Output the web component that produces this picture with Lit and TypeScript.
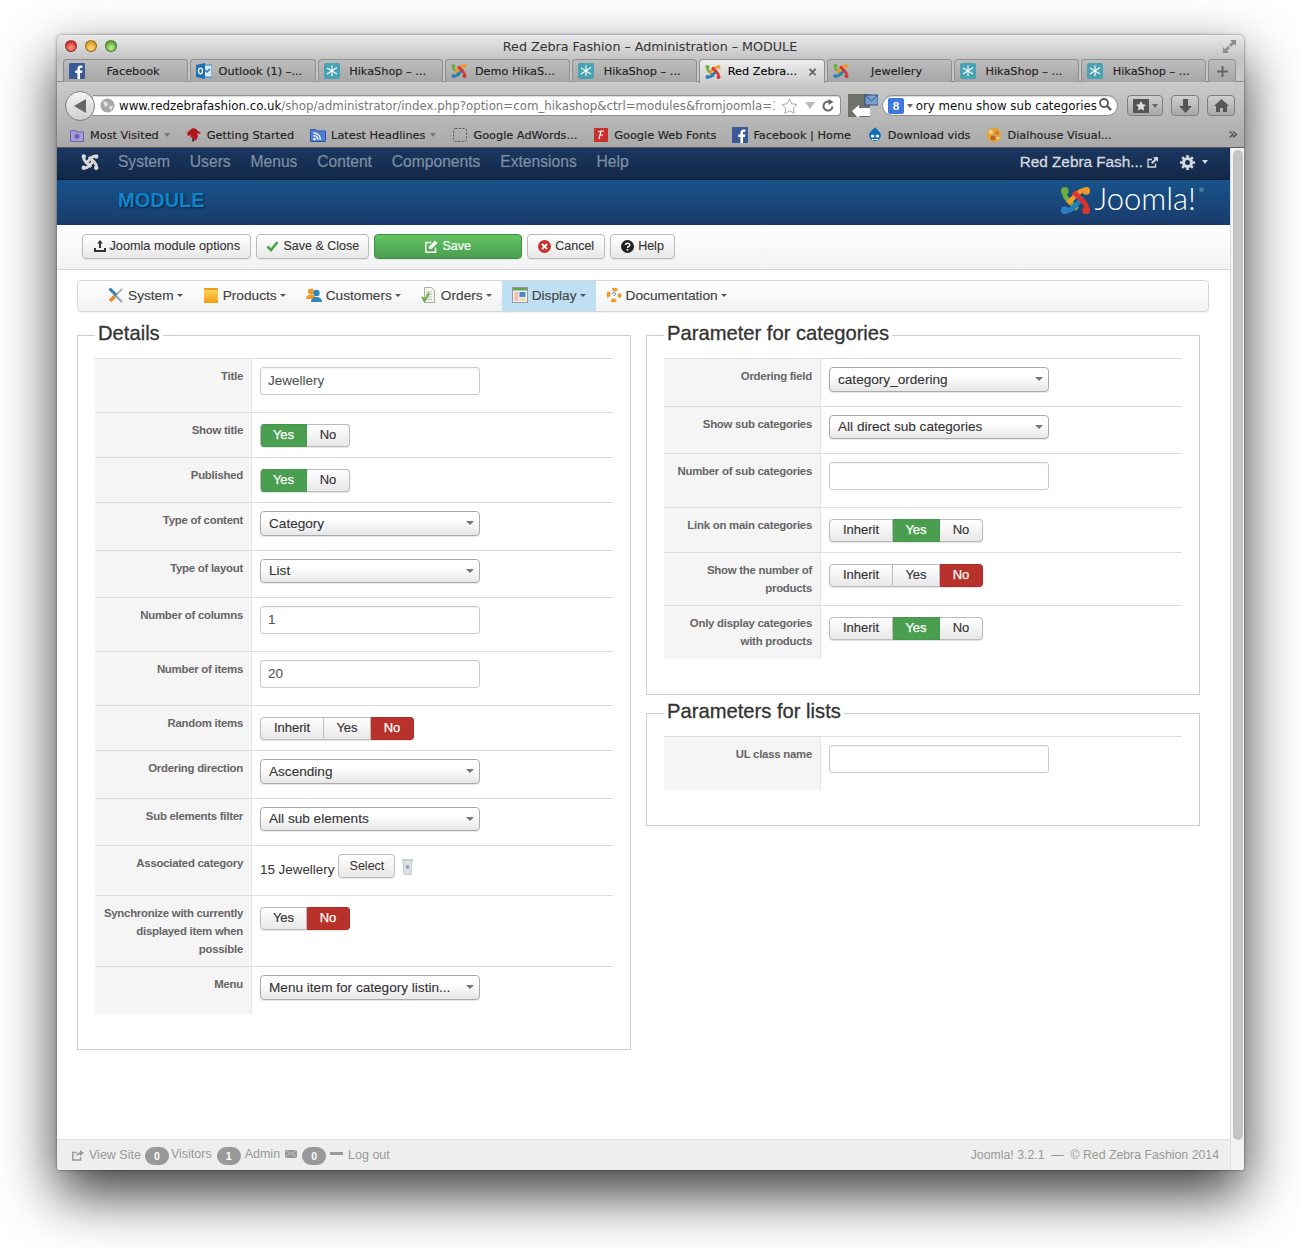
import { LitElement, html, css, svg } from "lit";
import { customElement } from "lit/decorators.js";

const joomlaPaths = (g: string, o: string, r: string, b: string) => svg`
  <g fill="none" stroke-width="5" stroke-linecap="butt">
    <path stroke="${g}" d="M5 7C4 10 6 12 8 14L18 24"/>
    <path stroke="${o}" d="M25 5C22 4 20 6 18 8L8 18"/>
    <path stroke="${b}" d="M7 25C10 26 12 24 14 22L24 12"/>
    <path stroke="${r}" d="M27 23C28 20 26 18 24 16L14 6"/>
  </g>
  <circle cx="5" cy="5" r="4" fill="${g}"/><circle cx="27" cy="5" r="4" fill="${o}"/>
  <circle cx="5" cy="25" r="4" fill="${b}"/><circle cx="27" cy="25" r="4" fill="${r}"/>`;

const joomla = (size: number, mono?: string) => html`<svg class="ic" width="${size}" height="${size}" viewBox="0 0 32 30">
  ${mono ? joomlaPaths(mono, mono, mono, mono) : joomlaPaths("#6cae3e", "#f09a2c", "#d9352f", "#2c7cc0")}</svg>`;

const fb = html`<svg class="ic" width="16" height="16" viewBox="0 0 16 16"><rect width="16" height="16" rx="1" fill="#3b5998"/><path fill="#fff" d="M11 16V10h2l.4-2.500H11V6c0-.8.3-1.200 1.200-1.200h1.300V2.500c-.4 0-1.100-.1-1.900-.1-2 0-3.200 1.200-3.200 3.300v1.800H6.200V10h2.200v6z"/></svg>`;
const outlook = html`<svg class="ic" width="16" height="16" viewBox="0 0 16 16"><rect x="6" y="2" width="10" height="12" fill="#d8e8f6" stroke="#3b88c8"/><path d="M9 7l2 2 3-3" stroke="#1f6fb5" stroke-width="1.400" fill="none"/><path fill="#1f6fb5" d="M0 2l9-2v16l-9-2z"/><ellipse cx="4.500" cy="8" rx="2" ry="2.800" fill="none" stroke="#fff" stroke-width="1.300"/></svg>`;
const hika = html`<svg class="ic" width="16" height="16" viewBox="0 0 16 16"><rect width="16" height="16" rx="2" fill="#4aa3b5"/><path stroke="#fff" stroke-width="1.100" fill="none" d="M8 2.500V13M3 5l10 6M13 4.500L3 11"/></svg>`;
const purpleFolder = html`<svg class="ic" width="16" height="16" viewBox="0 0 16 16"><path fill="#a79bd8" stroke="#6f62a8" d="M1.500 3.500h5l1 1.500h7v9.500h-13z"/><circle cx="8" cy="9.500" r="2.500" fill="#6f5cc0"/></svg>`;
const fireDragon = html`<svg class="ic" width="16" height="16" viewBox="0 0 16 16"><path fill="#b3171d" d="M1 6l3-3 3-2 3 1 2 2 3 2-2 1-2-1 1 3-1 3-2 2-1-2-1 1-1-3-2 1 1-3-3 1z"/><path fill="#1a1a1a" d="M6 14l1-4 1 5zM9 3l1 1-1 0z"/></svg>`;
const rss = html`<svg class="ic" width="16" height="16" viewBox="0 0 16 16"><path fill="#4f7fd8" stroke="#2b55a8" d="M.5 2.500h5l1 1.500h9v10.500H.5z"/><circle cx="4.500" cy="12" r="1.300" fill="#fff"/><path d="M3.500 8.500a4.500 4.500 0 0 1 4.500 4.500M3.500 5.800a7 7 0 0 1 7 7" stroke="#fff" stroke-width="1.300" fill="none"/></svg>`;
const dashed = html`<svg class="ic" width="16" height="16" viewBox="0 0 16 16"><rect x="1.500" y="1.500" width="13" height="13" rx="2" fill="none" stroke="#555" stroke-dasharray="2 1.500"/></svg>`;
const fontsIc = html`<svg class="ic" width="16" height="16" viewBox="0 0 16 16"><rect x="1" y="1" width="14" height="14" fill="#c9302c"/><path d="M6 12l2-8h3M6.500 8h3.500M5 4.500h3" stroke="#fff" stroke-width="1.200" fill="none"/></svg>`;
const drupal = html`<svg class="ic" width="16" height="16" viewBox="0 0 16 16"><path fill="#0b6fb5" d="M8 0c1 2 5 4 6 8a6 6 0 0 1-12 0c1-4 5-6 6-8z"/><ellipse cx="5.500" cy="9" rx="1.800" ry="1.600" fill="#fff"/><ellipse cx="10.500" cy="9" rx="1.800" ry="1.600" fill="#fff"/><path d="M5 12.500h6" stroke="#fff" stroke-width="1.200"/></svg>`;
const dial = html`<svg class="ic" width="16" height="16" viewBox="0 0 16 16"><circle cx="8" cy="8" r="7.500" fill="#e0a53c"/><circle cx="5" cy="5" r="2" fill="#f4d878"/><circle cx="11" cy="6" r="2" fill="#d9782f"/><circle cx="7" cy="11" r="2.500" fill="#b85f30"/><circle cx="12" cy="11" r="1.500" fill="#f0d080"/></svg>`;

const upload = html`<svg class="ic" width="12" height="12" viewBox="0 0 12 12"><path fill="#333" d="M6 0l3 3.500H7V8H5V3.500H3zM0 8h2v2h8V8h2v4H0z"/></svg>`;
const check = html`<svg class="ic" width="13" height="12" viewBox="0 0 13 12"><path d="M1.500 6.500l3.500 3.500L11.500 2" fill="none" stroke="#46a546" stroke-width="2.600"/></svg>`;
const edit = html`<svg class="ic" width="13" height="13" viewBox="0 0 13 13"><path fill="none" stroke="#fff" stroke-width="1.500" d="M10.500 7.500v4.700H.8V2.500h5.500"/><path fill="#fff" d="M4 6.500L10 .5l2.500 2.500-6 6H4z"/></svg>`;
const cancel = html`<svg class="ic" width="13" height="13" viewBox="0 0 13 13"><circle cx="6.500" cy="6.500" r="6.500" fill="#c9302c"/><path d="M4 4l5 5M9 4l-5 5" stroke="#fff" stroke-width="1.800"/></svg>`;
const help = html`<svg class="ic" width="13" height="13" viewBox="0 0 13 13"><circle cx="6.500" cy="6.500" r="6.500" fill="#222"/><path d="M4.500 5c0-2.500 4.200-2.500 4.200 0 0 1.600-2.200 1.400-2.200 3" fill="none" stroke="#fff" stroke-width="1.500"/><rect x="5.700" y="9" width="1.600" height="1.600" fill="#fff"/></svg>`;

const tools = html`<svg class="ic" width="16" height="16" viewBox="0 0 16 16"><path d="M8 8L14 2" stroke="#a8b0b8" stroke-width="2"/><path d="M2 14L8 8" stroke="#e88a25" stroke-width="3.400"/><path d="M7 8l7 7" stroke="#8fa0ae" stroke-width="2"/><path d="M1.500 1.500L8 8" stroke="#2f7fb8" stroke-width="3"/></svg>`;
const folder = html`<svg class="ic" width="16" height="16" viewBox="0 0 16 16" ><defs><linearGradient id="fo" x1="0" y1="0" x2="0" y2="1"><stop offset="0" stop-color="#ffd25a"/><stop offset="1" stop-color="#f59d12"/></linearGradient></defs><path fill="#e8a020" d="M1 1h14v3H1z"/><rect x="1" y="3" width="14" height="13" fill="url(#fo)"/></svg>`;
const users = html`<svg class="ic" width="16" height="16" viewBox="0 0 16 16"><circle cx="5" cy="4.500" r="3" fill="#f09a2c"/><path fill="#f09a2c" d="M0 12c0-3 2-4.500 5-4.500s5 1.500 5 4.500z"/><circle cx="10.500" cy="6" r="3.200" fill="#2f86b8"/><path fill="#2f86b8" d="M5 15c0-3.500 2.500-5 5.500-5s5.500 1.500 5.500 5z"/></svg>`;
const orders = html`<svg class="ic" width="16" height="16" viewBox="0 0 16 16"><path fill="#f5f5f0" stroke="#aaa" d="M3.500.5h7l3 3v12h-10z"/><path stroke="#bbb" d="M5 5h6M5 7.500h6M5 10h6M5 12.500h6"/><path d="M1 10l2.500 4L8 6" fill="none" stroke="#6cae3e" stroke-width="2"/></svg>`;
const display = html`<svg class="ic" width="16" height="16" viewBox="0 0 16 16"><rect x=".5" y=".5" width="15" height="15" fill="#eef" stroke="#999"/><rect x="1" y="1" width="14" height="2.500" fill="#5aa84a"/><rect x="2.500" y="5" width="4" height="9" fill="#f4b8a8"/><rect x="7.500" y="5" width="6" height="5" fill="#4a8ac8"/><rect x="7.500" y="11" width="6" height="3" fill="#e8e090"/></svg>`;
const buoy = html`<svg class="ic" width="16" height="16" viewBox="0 0 16 16"><circle cx="8" cy="8" r="5.500" fill="none" stroke="#f09a2c" stroke-width="3.600" stroke-dasharray="5 3.640" stroke-dashoffset="2.500"/><circle cx="8" cy="8" r="5.500" fill="none" stroke="#e8e8e8" stroke-width="1"  stroke-dasharray="3 5.640" stroke-dashoffset="-3.200"/><path d="M6.500 7c0-2 3-2 3 0 0 1-1.500 1-1.500 2" fill="none" stroke="#3d7fb5"/></svg>`;

const tabs: [any, string, boolean?][] = [
  [fb, "Facebook"], [outlook, "Outlook (1) –..."], [hika, "HikaShop – ..."], [joomla(16), "Demo HikaS..."],
  [hika, "HikaShop – ..."], [joomla(16), "Red Zebra...", true], [joomla(16), "Jewellery"], [hika, "HikaShop – ..."], [hika, "HikaShop – ..."],
];
const marks: [any, string, boolean?][] = [
  [purpleFolder, "Most Visited", true], [fireDragon, "Getting Started"], [rss, "Latest Headlines", true], [dashed, "Google AdWords..."],
  [fontsIc, "Google Web Fonts"], [fb, "Facebook | Home"], [drupal, "Download vids"], [dial, "Dialhouse Visual..."],
];

type Row = { label: string[]; kind: "input" | "sel" | "tg" | "assoc"; value?: string; opts?: string[]; on?: string };
const yn = ["Yes", "No"], iyn = ["Inherit", "Yes", "No"];
const left: Row[] = [
  { label: ["Title"], kind: "input", value: "Jewellery" },
  { label: ["Show title"], kind: "tg", opts: yn, on: "Yes" },
  { label: ["Published"], kind: "tg", opts: yn, on: "Yes" },
  { label: ["Type of content"], kind: "sel", value: "Category" },
  { label: ["Type of layout"], kind: "sel", value: "List" },
  { label: ["Number of columns"], kind: "input", value: "1" },
  { label: ["Number of items"], kind: "input", value: "20" },
  { label: ["Random items"], kind: "tg", opts: iyn, on: "No" },
  { label: ["Ordering direction"], kind: "sel", value: "Ascending" },
  { label: ["Sub elements filter"], kind: "sel", value: "All sub elements" },
  { label: ["Associated category"], kind: "assoc" },
  { label: ["Synchronize with currently", "displayed item when", "possible"], kind: "tg", opts: yn, on: "No" },
  { label: ["Menu"], kind: "sel", value: "Menu item for category listin..." },
];
const right: Row[] = [
  { label: ["Ordering field"], kind: "sel", value: "category_ordering" },
  { label: ["Show sub categories"], kind: "sel", value: "All direct sub categories" },
  { label: ["Number of sub categories"], kind: "input", value: "" },
  { label: ["Link on main categories"], kind: "tg", opts: iyn, on: "Yes" },
  { label: ["Show the number of", "products"], kind: "tg", opts: iyn, on: "No" },
  { label: ["Only display categories", "with products"], kind: "tg", opts: iyn, on: "Yes" },
];
const lists: Row[] = [{ label: ["UL class name"], kind: "input", value: "" }];

@customElement("app-root")
export class AppRoot extends LitElement {
  static styles = css`
    :host { display: block; width: 1301px; height: 1249px; padding: 35px 57px 0; box-sizing: border-box; background: #fff; font-family: "Liberation Sans", Arial, sans-serif; overflow: hidden; }
    * { box-sizing: border-box; }
    .ic { display: block; flex: none; }
    .win { width: 1187px; height: 1135px; display: flex; flex-direction: column; border-radius: 5px 5px 3px 3px; box-shadow: 0 24px 56px rgba(0,0,0,.78), 0 0 3px rgba(0,0,0,.5); background: #fff; overflow: hidden; }
    .chrome { height: 113px; flex: none; display: flex; flex-direction: column; background: linear-gradient(#e9e9e9, #c4c4c4 24px, #c9c9c9 48px, #a9a9a9 113px); font-family: "DejaVu Sans", sans-serif; color: #222; border-bottom: 1px solid #5a5a5a; }
    .title { height: 24px; flex: none; display: flex; align-items: center; padding: 0 8px 2px; gap: 8px; }
    .dot { width: 12px; height: 12px; border-radius: 50%; border: 1px solid rgba(0,0,0,.35); }
    .dot.r { background: radial-gradient(circle at 50% 70%, #ff9a8f, #d7342b 70%); }
    .dot.y { background: radial-gradient(circle at 50% 70%, #ffe08a, #d99a1d 70%); }
    .dot.g { background: radial-gradient(circle at 50% 70%, #bdf29a, #5da832 70%); }
    .ttext { flex: 1; text-align: center; font-size: 12.7px; color: #333; padding-right: 40px; }
    .tabs { height: 23px; flex: none; display: flex; gap: 2px; padding-left: 6px; border-bottom: 1px solid #8a8a8a; }
    .tab { width: 125.25px; height: 23px; flex: none; display: flex; align-items: center; padding: 0 6px 0 5px; border: 1px solid #8f8f8f; border-bottom: none; border-radius: 4px 4px 0 0; background: linear-gradient(#bdbdbd, #a6a6a6); font-size: 11.3px; color: #222; -webkit-text-stroke: .15px #222; }
    .tab.on { background: linear-gradient(#eee, #cdcdcd); color: #000; height: 24px; z-index: 1; }
    .tab span { flex: 1; text-align: center; white-space: nowrap; overflow: hidden; }
    .tab .x { flex: none; width: 14px; color: #666; font-size: 12px; text-align: right; font-weight: 700; }
    .plus { width: 28px; height: 23px; border: 1px solid #8f8f8f; border-bottom: none; border-radius: 4px 4px 0 0; background: linear-gradient(#bdbdbd, #a6a6a6); display: flex; align-items: center; justify-content: center; color: #555; }
    .nav { height: 42px; flex: none; display: flex; align-items: center; padding-left: 8px; padding-top: 5px; }
    .back { width: 30px; height: 30px; border-radius: 50%; background: linear-gradient(#f4f4f4, #cfcfcf); border: 1px solid #7d7d7d; display: flex; align-items: center; justify-content: center; flex: none; position: relative; z-index: 1; }
    .url { width: 748px; margin-left: -2px; height: 21px; background: #fff; border: 1px solid #8d8d8d; border-left: none; border-radius: 0 4px 4px 0; display: flex; align-items: center; padding-left: 5px; flex: none; font-size: 11.8px; color: #777; box-shadow: inset 0 1px 1px rgba(0,0,0,.15); }
    .url .u { width: 656px; overflow: hidden; white-space: nowrap; margin-left: 4px; flex: none; }
    .url b { font-weight: 400; color: #111; }
    .url .end { display: flex; gap: 7px; align-items: center; margin-left: 6px; }
    .feed { width: 30px; height: 23px; margin-left: 7px; flex: none; }
    .search { width: 236px; height: 21px; margin-left: 4px; flex: none; background: #fff; border: 1px solid #8d8d8d; border-radius: 11px; display: flex; align-items: center; padding: 0 5px; font-size: 11.8px; color: #111; box-shadow: inset 0 1px 1px rgba(0,0,0,.15); }
    .gbox { width: 16px; height: 16px; background: #3c78e0; border-radius: 2px; color: #fff; font: 700 13px/16px "Liberation Serif", serif; text-align: center; flex: none; }
    .tri { width: 0; height: 0; border-left: 3.500px solid transparent; border-right: 3.500px solid transparent; border-top: 4px solid #666; flex: none; }
    .q { width: 182px; margin: 0 2px 0 2px; display: flex; justify-content: flex-end; overflow: hidden; white-space: nowrap; flex: none; }
    .nb { height: 21px; border: 1px solid #7d7d7d; border-radius: 4px; background: linear-gradient(#cfcfcf, #a8a8a8); display: flex; align-items: center; justify-content: center; gap: 3px; flex: none; margin-left: 8px; }
    .marks { height: 24px; flex: none; display: flex; align-items: center; padding: 0 0 2px 12px; font-size: 11.3px; color: #222; -webkit-text-stroke: .15px #222; white-space: nowrap; position: relative; }
    .mk { display: flex; align-items: center; gap: 5px; margin-right: 16px; }
    .more { position: absolute; right: 6px; top: 0; font-size: 16px; color: #555; }

    .page { flex: 1; display: flex; min-height: 0; }
    .main { flex: 1; display: flex; flex-direction: column; min-width: 0; }
    .sb { width: 14px; flex: none; background: #f3f3f3; border-left: 1px solid #ddd; padding: 2px 1px 30px 2px; }
    .sb div { height: 100%; border-radius: 6px; background: #c4c4c4; }
    .topnav { height: 32px; flex: none; display: flex; align-items: center; background: linear-gradient(#1b3760, #122747); border-bottom: 1px solid #0d1c33; padding: 0 0 3px 24px; color: #7e8ea5; font-size: 15.65px; -webkit-text-stroke: .2px #7e8ea5; }
    .tn { padding: 0 9.900px; }
    .topnav .lg { margin-right: 9px; }
    .topnav .rt { margin-left: auto; display: flex; align-items: center; color: #d5d9de; -webkit-text-stroke: .3px #d5d9de; font-size: 15.3px; padding-right: 22px; gap: 4px; }
    .hdr { height: 45px; flex: none; display: flex; align-items: center; justify-content: space-between; background: linear-gradient(#175389, #1a3b6c); padding: 0 26px 4px 61px; }
    .hdr h1 { margin: 0; font-size: 20px; font-weight: 700; color: #0b86cd; text-shadow: 1px 1px 2px rgba(0,0,0,.6); }
    .brand { display: flex; align-items: center; gap: 3px; color: #fff; font: 300 31px/30px Lato, "Open Sans", sans-serif; }
    .brand span { margin-top: -5px; }
    .brand sup { font-size: 6px; line-height: 6px; align-self: flex-start; margin: 2px 0 0 0; }
    .bar { height: 45px; flex: none; display: flex; align-items: center; gap: 5px; padding: 0 0 2px 25px; background: linear-gradient(#fff, #f2f2f2); border-bottom: 1px solid #d5d5d5; }
    .btn { height: 25px; display: flex; align-items: center; justify-content: center; gap: 4px; padding: 0 10px; background: linear-gradient(#fff, #e8e8e8); border: 1px solid #bbb; border-radius: 4px; font-size: 12.5px; color: #333; -webkit-text-stroke: .1px #333; white-space: nowrap; box-shadow: 0 1px 1px rgba(0,0,0,.08); }
    .btn.first { font-size: 12.7px; padding: 0 10.500px; }
    .btn.second { padding: 0 9px; }
    .btn.save { width: 148px; background: linear-gradient(#62c462, #4a9e4f); border-color: #3f8f44; color: #fff; -webkit-text-stroke: .2px #fff; }
    .body { flex: 1; min-height: 0; padding: 10px 0 0 20px; }
    .menu { width: 1132px; height: 32px; display: flex; align-items: stretch; padding-left: 20px; background: linear-gradient(#fff, #f2f2f2); border: 1px solid #d5d5d5; border-radius: 4px; font-size: 13.7px; color: #444; box-shadow: 0 1px 1px rgba(0,0,0,.06); }
    .mi { display: flex; align-items: center; gap: 4px; padding: 0 10px 2px; -webkit-text-stroke: .15px #444; }
    .mi.on { background: #bfe0f3; }
    .caret { width: 0; height: 0; border-left: 3px solid transparent; border-right: 3px solid transparent; border-top: 3px solid #555; margin-left: -1px; flex: none; }
    .cols { display: flex; gap: 15px; margin-top: 11px; align-items: flex-start; }
    .col { width: 554px; flex: none; display: flex; flex-direction: column; gap: 6px; }
    fieldset { margin: 0; padding: 11px 17px 35px; border: 1px solid #ccc; min-width: 0; width: 554px; }
    legend { padding: 0 3px 4px; font-size: 20.2px; line-height: 20px; color: #333; -webkit-text-stroke: .3px #333; }
    .row { display: flex; border-top: 1px solid #ddd; }
    .lab { width: 157px; flex: none; background: #f5f5f5; border-right: 1px solid #e5e5e5; padding: 8px 8px 8px 0; text-align: right; font-size: 11.4px; letter-spacing: -.25px; line-height: 18px; font-weight: 700; color: #666; }
    .row:last-child .lab { padding-bottom: 9px; }
    .val { flex: 1; padding-left: 8px; }
    .inp { width: 220px; height: 28px; margin: 8px 0 17px; border: 1px solid #ccc; border-radius: 3px; background: #fff; padding: 0 7px; font-size: 13.5px; line-height: 26px; color: #555; -webkit-text-stroke: .1px #555; box-shadow: inset 0 1px 1px rgba(0,0,0,.05); }
    .sel { width: 220px; height: 24.500px; margin: 8px 0 14px; border: 1px solid #aaa; border-radius: 4px; background: linear-gradient(#fff 35%, #e6e6e6); padding: 0 5px 0 8px; font-size: 13.6px; color: #333; -webkit-text-stroke: .1px #333; display: flex; align-items: center; justify-content: space-between; box-shadow: 0 1px 1px rgba(0,0,0,.1); }
    .sel .tri { border-top-color: #777; border-left-width: 4px; border-right-width: 4px; }
    .tg { display: flex; margin: 11px 0 10px; height: 23px; width: fit-content; border-radius: 4px; box-shadow: 0 1px 1px rgba(0,0,0,.12); font-size: 13px; }
    .tg div { display: flex; align-items: center; justify-content: center; padding-bottom: 2px; background: linear-gradient(#fff, #e8e8e8); border: 1px solid #bbb; border-left: none; color: #333; -webkit-text-stroke: .15px #333; }
    .tg div:first-child { border-left: 1px solid #bbb; border-radius: 4px 0 0 4px; }
    .tg div:last-child { border-radius: 0 4px 4px 0; }
    .tg .Inherit { width: 64px; }
    .tg .Yes { width: 47px; }
    .tg .No { width: 43px; }
    .tg .g { background: #4a9e4f; border-color: #46964b; color: #fff; -webkit-text-stroke: .25px #fff; }
    .tg .d { background: #b8312b; border-color: #b02d27; color: #fff; -webkit-text-stroke: .25px #fff; }
    .assoc { display: flex; align-items: flex-start; height: 49px; font-size: 13.4px; color: #333; }
    .assoc .t { margin: 16px 4px 0 0; }
    .assoc .b { margin-top: 8px; height: 24px; width: 57px; padding-bottom: 1px; display: flex; align-items: center; justify-content: center; background: linear-gradient(#fff, #e8e8e8); border: 1px solid #bbb; border-radius: 4px; font-size: 12.500px; box-shadow: 0 1px 1px rgba(0,0,0,.1); }
    .assoc svg { margin: 12px 0 0 7px; }
    .foot { height: 31px; flex: none; display: flex; align-items: center; background: #eee; border-top: 1px solid #ddd; padding: 0 11px 0 15px; font-size: 12.500px; color: #999; }
    .foot .tx { margin-left: 5px; }
    .badge { width: 24px; height: 18px; border-radius: 9px; background: #999; color: #fff; font-size: 10.500px; font-weight: 700; display: flex; align-items: center; justify-content: center; margin: 2px 2px 0 4px; flex: none; }
    .badge.wide { margin-left: 5px; }
    .foot .up { margin-top: -2px; }
    .foot .adm { margin-left: 2px; }
    .foot .rt { margin-left: auto; font-size: 12.3px; }
  `;

  private control(r: Row) {
    if (r.kind === "input") return html`<div class="inp">${r.value}</div>`;
    if (r.kind === "sel") return html`<div class="sel"><span>${r.value}</span><i class="tri"></i></div>`;
    if (r.kind === "tg") {
      return html`<div class="tg">${r.opts!.map((o) => {
        const cls = o === r.on ? (o === "No" ? "d" : "g") : "";
        return html`<div class="${o} ${cls}">${o}</div>`;
      })}</div>`;
    }
    return html`<div class="assoc"><span class="t">15 Jewellery</span><span class="b">Select</span>
      <svg width="11" height="17" viewBox="0 0 11 17"><path fill="#dfe2e5" stroke="#c2c6cb" d="M1 2.500h9l-1 14H2z"/><rect x="0" y="1" width="11" height="2" fill="#c8cbcf"/><circle cx="5.500" cy="9" r="2" fill="#8ea6bd"/></svg></div>`;
  }

  private rows(list: Row[]) {
    return list.map((r) => html`<div class="row"><div class="lab">${r.label.map((l) => html`${l}<br />`)}</div><div class="val">${this.control(r)}</div></div>`);
  }

  render() {
    return html`<div class="win">
      <div class="chrome">
        <div class="title">
          <i class="dot r"></i><i class="dot y"></i><i class="dot g"></i>
          <div class="ttext">Red Zebra Fashion – Administration – MODULE</div>
          <svg class="ic" width="13" height="13" viewBox="0 0 13 13"><path fill="#8c8c8c" d="M13 0v6l-2-2-3 3-2-2 3-3-2-2zM0 13V7l2 2 3-3 2 2-3 3 2 2z"/></svg>
        </div>
        <div class="tabs">
          ${tabs.map(([ic, t, on]) => html`<div class="tab ${on ? "on" : ""}">${ic}<span>${t}</span>${on ? html`<span class="x">×</span>` : ""}</div>`)}
          <div class="plus"><svg width="11" height="11" viewBox="0 0 11 11"><path d="M5.500 0v11M0 5.500h11" stroke="#666" stroke-width="2"/></svg></div>
        </div>
        <div class="nav">
          <div class="back"><svg width="14" height="16" viewBox="0 0 14 16"><path d="M13 1v14L1 8z" fill="#666"/></svg></div>
          <div class="url">
            <svg class="ic" style="margin-left:2px" width="15" height="15" viewBox="0 0 15 15"><circle cx="7.500" cy="7.500" r="7" fill="#a8a8a8"/><path d="M3 3l4 1 1 3-3 2zM9 8l4 0-2 5z" fill="#e4e4e4"/></svg>
            <div class="u"><b>www.redzebrafashion.co.uk</b>/shop/administrator/index.php?option=com_hikashop&amp;ctrl=modules&amp;fromjoomla=1</div>
            <div class="end">
              <svg class="ic" width="17" height="16" viewBox="0 0 17 16"><path d="M8.500 1l2.300 4.800 5.200.7-3.800 3.600 1 5.200-4.700-2.600L3.800 15.300l1-5.200L1 6.500l5.200-.7z" fill="#fff" stroke="#aaa"/></svg>
              <i class="tri" style="border-left-width:5px;border-right-width:5px;border-top:7px solid #bbb"></i>
              <svg class="ic" width="12" height="13" viewBox="0 0 12 13"><path d="M10.500 7.500A4.500 4.500 0 1 1 8 3" fill="none" stroke="#666" stroke-width="2"/><path d="M6.500 0L11.500 3 6.500 6z" fill="#666"/></svg>
            </div>
          </div>
          <svg class="feed" viewBox="0 0 30 23"><rect x="0" y="0" width="22" height="23" fill="#6f7268"/><path d="M4 17l7-6v3h11v8H11v3z" fill="#fff"/><rect x="17" y="1" width="13" height="10" fill="#7ba0d0" stroke="#2d4f82"/><path d="M17 1l6.500 6L30 1" fill="none" stroke="#2d4f82"/></svg>
          <div class="search">
            <div class="gbox">8</div><i class="tri" style="margin-left:3px"></i>
            <div class="q">category menu show sub categories</div>
            <svg class="ic" width="13" height="13" viewBox="0 0 13 13" style="margin-top:-2px"><circle cx="5" cy="5" r="4" fill="none" stroke="#555" stroke-width="1.800"/><path d="M8 8l4 4" stroke="#555" stroke-width="2.400"/></svg>
          </div>
          <div class="nb" style="width:36px;margin-left:9px"><svg class="ic" width="16" height="14" viewBox="0 0 16 14"><rect width="16" height="14" fill="#555"/><path d="M8 2l1.700 3.300 3.300.5-2.400 2.300.6 3.400L8 10l-3.200 1.500.6-3.400L3 5.800l3.300-.5z" fill="#ddd"/></svg><i class="tri"></i></div>
          <div class="nb" style="width:28px"><svg class="ic" width="13" height="14" viewBox="0 0 13 14"><path d="M4 0h5v7h4l-6.500 7L0 7h4z" fill="#555"/></svg></div>
          <div class="nb" style="width:28px"><svg class="ic" width="15" height="13" viewBox="0 0 15 13"><path d="M7.500 0L15 7h-2v6H9V9H6v4H2V7H0z" fill="#555"/></svg></div>
        </div>
        <div class="marks">
          ${marks.map(([ic, t, c]) => html`<div class="mk">${ic}<span>${t}</span>${c ? html`<i class="tri" style="border-top-color:#777"></i>` : ""}</div>`)}
          <span class="more">»</span>
        </div>
      </div>
      <div class="page">
        <div class="main">
          <div class="topnav">
            <span class="lg">${joomla(18, "#d8d8d8")}</span>
            ${["System", "Users", "Menus", "Content", "Components", "Extensions", "Help"].map((m) => html`<span class="tn">${m}</span>`)}
            <div class="rt"><span>Red Zebra Fash...</span>
              <svg class="ic" width="11" height="11" viewBox="0 0 11 11"><path d="M8.500 6.500v3.500h-7.500v-7.500h4" fill="none" stroke="#d5d9de" stroke-width="1.300"/><path d="M6 0h5v5L9.300 3.300 5.500 7 4 5.500 7.700 1.700z" fill="#d5d9de"/></svg>
              <svg class="ic" style="margin-left:18px" width="15" height="15" viewBox="0 0 15 15"><circle cx="7.500" cy="7.500" r="4" fill="none" stroke="#d5d9de" stroke-width="3"/><path d="M7.500 0v15M0 7.500h15M2.200 2.200l10.600 10.600M12.800 2.200L2.200 12.800" stroke="#d5d9de" stroke-width="2.500" stroke-dasharray="2.600 9.800"/></svg>
              <i class="tri" style="border-top-color:#d5d9de;margin-left:3px"></i>
            </div>
          </div>
          <div class="hdr"><h1>MODULE</h1><div class="brand">${joomla(31)}<span>Joomla!</span><sup>®</sup></div></div>
          <div class="bar">
            <div class="btn first">${upload}Joomla module options</div>
            <div class="btn second">${check}Save &amp; Close</div>
            <div class="btn save">${edit}Save</div>
            <div class="btn">${cancel}Cancel</div>
            <div class="btn">${help}Help</div>
          </div>
          <div class="body">
            <div class="menu">
              ${[[tools, "System"], [folder, "Products"], [users, "Customers"], [orders, "Orders"], [display, "Display"], [buoy, "Documentation"]].map(
                ([ic, t]) => html`<div class="mi ${t === "Display" ? "on" : ""}">${ic}<span>${t}</span><i class="caret"></i></div>`
              )}
            </div>
            <div class="cols">
              <div class="col"><fieldset><legend>Details</legend>${this.rows(left)}</fieldset></div>
              <div class="col">
                <fieldset><legend>Parameter for categories</legend>${this.rows(right)}</fieldset>
                <fieldset><legend>Parameters for lists</legend>${this.rows(lists)}</fieldset>
              </div>
            </div>
          </div>
          <div class="foot">
            <svg class="ic" width="12" height="11" viewBox="0 0 12 11"><path d="M8.500 7v3H.8V2.500h4" fill="none" stroke="#999" stroke-width="1.500"/><path d="M8 0l4 3-4 3V4.500C6 4.500 4.500 5.500 4 7c0-3 1.500-4.500 4-4.800z" fill="#999"/></svg>
            <span class="tx">View Site</span><span class="badge">0</span>
            <span class="up">Visitors</span><span class="badge wide">1</span>
            <span class="up adm">Admin</span>
            <svg class="ic" style="margin-left:5px;margin-top:-2px" width="12" height="8" viewBox="0 0 12 8"><rect width="12" height="8" fill="#999"/><path d="M0 0l6 4 6-4M0 8l4-4M12 8L8 4" stroke="#ddd" stroke-width=".6" fill="none"/></svg>
            <span class="badge wide">0</span>
            <svg class="ic" style="margin-left:2px;margin-top:-3px" width="13" height="3" viewBox="0 0 13 3"><rect width="13" height="3" fill="#999"/></svg>
            <span class="tx">Log out</span>
            <span class="rt">Joomla! 3.2.1 &nbsp;—&nbsp; © Red Zebra Fashion 2014</span>
          </div>
        </div>
        <div class="sb"><div></div></div>
      </div>
    </div>`;
  }
}
